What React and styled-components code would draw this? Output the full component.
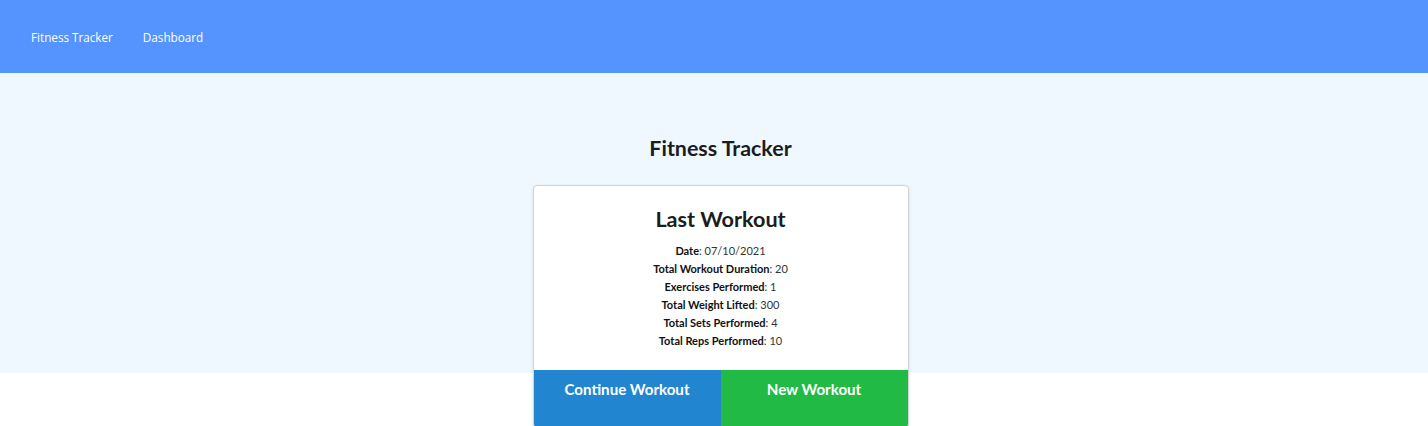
import React from 'react';
import styled, { createGlobalStyle } from 'styled-components';

const GlobalStyle = createGlobalStyle`
    body {
        margin: 0;
        background: #fff;
        font-family: Lato, "Helvetica Neue", Arial, sans-serif;
        color: rgba(0, 0, 0, 0.87);
    }
`;

const NavBar = styled.nav`
    display: flex;
    align-items: center;
    gap: 30px;
    height: 73px;
    padding: 0 31px;
    background-color: #5593fe;
    box-sizing: border-box;

    a {
        color: #fff;
        font-family: "Open Sans", "Noto Sans", sans-serif;
        font-size: 11.7px;
        text-decoration: none;
        margin-top: 1px;
    }
`;

const Hero = styled.section`
    height: 300px;
    background-color: #eff7ff;
    padding: 62px 0 0 13px;
    box-sizing: border-box;
    text-align: center;
`;

const Title = styled.h1`
    margin: 0;
    font-size: 21.4px;
    font-weight: 700;
    line-height: 26px;
    color: #1b1c1d;
`;

// pulled up over the hero so the card straddles the two backgrounds
const CardWrap = styled.main`
    margin-top: -188px;
    padding-left: 13px;
    display: flex;
    justify-content: center;
`;

const Card = styled.div`
    width: 376px;
    box-sizing: border-box;
    background: #fff;
    border: 1px solid #d4d4d5;
    border-radius: 4px;
    box-shadow: 0 1px 3px rgba(0, 0, 0, 0.12);
    overflow: hidden;
    text-align: center;
`;

const CardBody = styled.div`
    padding: 19px 10px 20px;

    h2 {
        margin: 0 0 8px;
        font-size: 21.6px;
        font-weight: 700;
        line-height: 29px;
        color: #1b1c1d;
    }
`;

const Stat = styled.p`
    margin: 0;
    font-size: 11px;
    line-height: 18px;
    color: #333;

    b {
        color: #111;
        font-weight: 700;
    }
`;

const Actions = styled.div`
    display: grid;
    grid-template-columns: 1fr 1fr;
`;

const ActionButton = styled.button`
    height: 57px;
    border: none;
    margin: 0;
    padding: 10px 0 0;
    display: flex;
    justify-content: center;
    align-items: flex-start;
    font-family: Lato, sans-serif;
    font-size: 15.1px;
    font-weight: 700;
    color: #fff;
    background-color: ${p => p.$color};
    cursor: pointer;
`;

const stats = [
    ['Date', '07/10/2021'],
    ['Total Workout Duration', '20'],
    ['Exercises Performed', '1'],
    ['Total Weight Lifted', '300'],
    ['Total Sets Performed', '4'],
    ['Total Reps Performed', '10'],
];

export default function App() {
    return (
        <>
            <GlobalStyle />
            <NavBar>
                <a href="#">Fitness Tracker</a>
                <a href="#">Dashboard</a>
            </NavBar>
            <Hero>
                <Title>Fitness Tracker</Title>
            </Hero>
            <CardWrap>
                <Card>
                    <CardBody>
                        <h2>Last Workout</h2>
                        {stats.map(([label, value]) => (
                            <Stat key={label}><b>{label}</b>: {value}</Stat>
                        ))}
                    </CardBody>
                    <Actions>
                        <ActionButton $color="#2185d0">Continue Workout</ActionButton>
                        <ActionButton $color="#21ba45">New Workout</ActionButton>
                    </Actions>
                </Card>
            </CardWrap>
        </>
    );
}
